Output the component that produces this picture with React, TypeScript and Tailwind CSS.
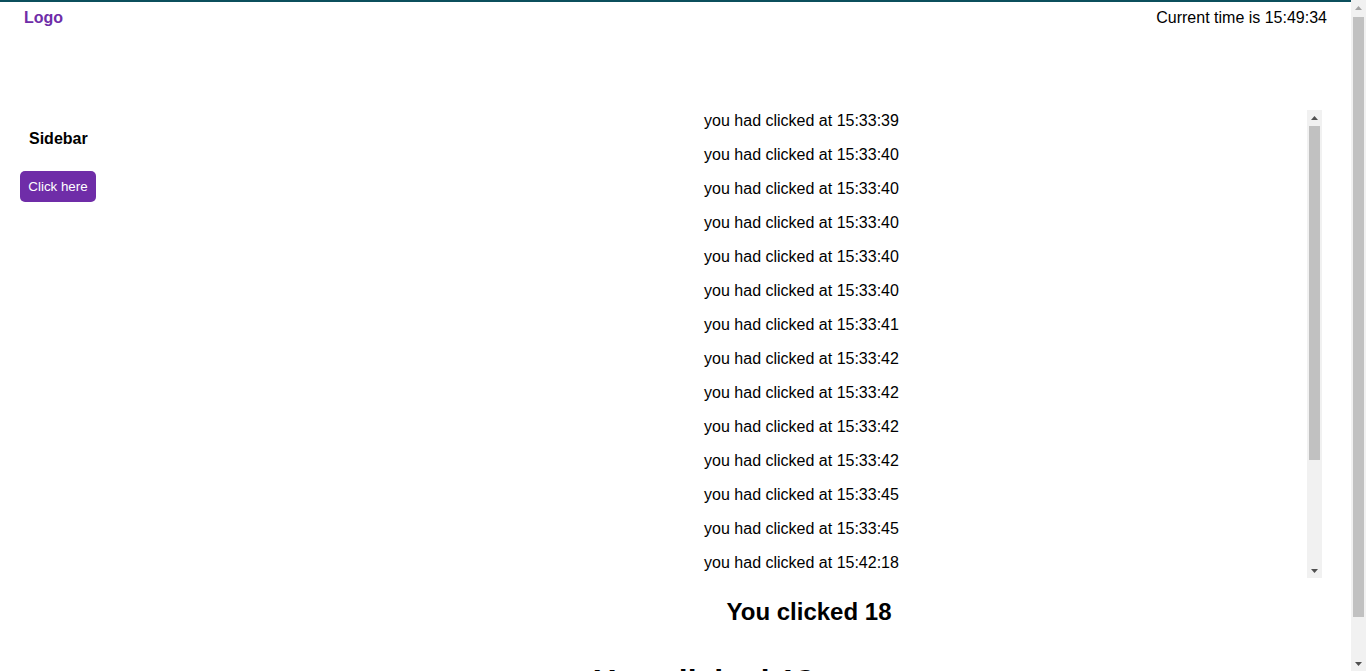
import React from "react";

const times = [
  "15:33:39",
  "15:33:40",
  "15:33:40",
  "15:33:40",
  "15:33:40",
  "15:33:40",
  "15:33:41",
  "15:33:42",
  "15:33:42",
  "15:33:42",
  "15:33:42",
  "15:33:45",
  "15:33:45",
  "15:42:18",
  "15:42:19",
  "15:42:20",
  "15:45:02",
  "15:49:30",
];

function Arrow({ up, color }: { up: boolean; color: string }) {
  return (
    <div className="flex h-[15px] w-[15px] items-center justify-center">
      <svg width="7" height="4" viewBox="0 0 7 4">
        {up ? <polygon points="3.5,0 7,4 0,4" fill={color} /> : <polygon points="0,0 7,0 3.5,4" fill={color} />}
      </svg>
    </div>
  );
}

function PageScrollbar() {
  return (
    <div className="flex h-full w-[15px] shrink-0 flex-col bg-[#f1f1f1]">
      <Arrow up color="#a3a3a3" />
      <div className="flex-1 pt-[2px]">
        <div className="mx-[2px] h-[600px] bg-[#c1c1c1]" />
      </div>
      <Arrow up={false} color="#505050" />
    </div>
  );
}

function ListScrollbar() {
  return (
    <div className="flex h-full w-[15px] shrink-0 flex-col bg-[#f1f1f1]">
      <Arrow up color="#505050" />
      <div className="flex-1 pt-[1px]">
        <div className="mx-[2px] h-[334px] bg-[#c1c1c1]" />
      </div>
      <Arrow up={false} color="#505050" />
    </div>
  );
}

export default function App() {
  return (
    <div className="flex h-[671px] overflow-hidden bg-white text-black font-['Liberation_Sans',Arial,sans-serif]">
      <div className="w-[1351px] shrink-0">
        <div className="h-[2px] bg-[#0b4f5c]" />
        <header className="flex justify-between px-6 pt-[7px]">
          <div className="text-[16px] leading-[18px] font-bold text-[#6f2da8]">Logo</div>
          <div className="text-[16px] leading-[18px]">Current time is 15:49:34</div>
        </header>
        <div className="mt-[83px] flex">
          <aside className="w-[296px] shrink-0 pl-5 pt-[20px]">
            <div className="ml-[9px] text-[16px] leading-[18px] font-bold">Sidebar</div>
            <button className="mt-[23px] h-[31px] w-[76px] rounded-[5px] bg-[#6f2da8] text-center text-[13.333px] leading-[15px] text-white">
              Click here
            </button>
          </aside>
          <main className="w-[1026px] shrink-0">
            <div className="flex h-[468px]">
              <div className="flex-1 overflow-hidden">
                {times.map((t, i) => (
                  <div key={i} className="h-[34px] pt-[2px] text-center text-[16px] leading-[18px]">
                    you had clicked at {t}
                  </div>
                ))}
              </div>
              <ListScrollbar />
            </div>
            <h2 className="mt-[20px] text-center text-[24px] leading-[28px] font-bold">You clicked 18</h2>
          </main>
        </div>
        <h1 className="mt-[37px] mb-[21px] pl-[57px] text-center text-[32px] leading-[37px] font-bold">
          You clicked 18
        </h1>
      </div>
      <PageScrollbar />
    </div>
  );
}
